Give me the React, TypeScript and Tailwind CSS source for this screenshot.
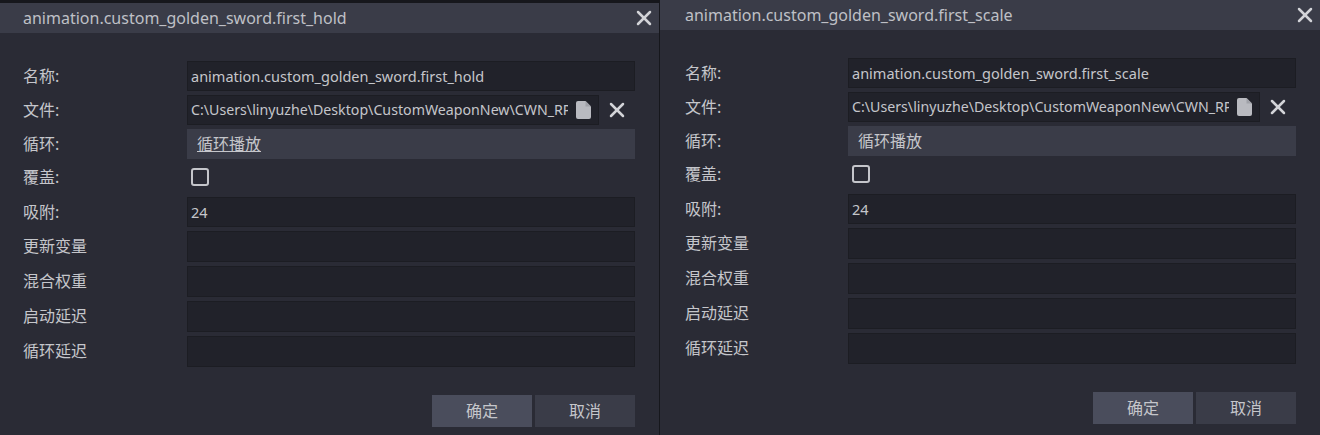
import { X } from 'lucide-react'

const font = { fontFamily: '"Noto Sans", "Noto Sans CJK SC", sans-serif' }

function Row({ label, children, className, labelClass = '' }: { label: string; children: React.ReactNode; className: string; labelClass?: string }) {
  return (
    <div className={`flex items-center ${className}`}>
      <div className={`flex-1 text-[16px] leading-none text-[#c5c6cb] ${labelClass}`}>{label}</div>
      <div className="flex h-full w-[448px] items-center">{children}</div>
    </div>
  )
}

function Field({ value }: { value?: string }) {
  return (
    <div className="h-full w-[448px] truncate border border-[#1c1d23] bg-[#21222a] pl-[3px] text-[14.5px] leading-[28px] text-[#c5c6cb]">
      {value}
    </div>
  )
}

function FileIcon() {
  return (
    <svg viewBox="0 0 15 18" className="h-[18px] w-[15px]" fill="#b9bac0">
      <path d="M2 0h7.5L15 5.5V16a2 2 0 0 1-2 2H2a2 2 0 0 1-2-2V2a2 2 0 0 1 2-2z" />
      <path d="M9.5 0v5.5H15z" fill="#a0a1a8" />
    </svg>
  )
}

function Dialog({ name, top, className, underline }: { name: string; top: boolean; className: string; underline: boolean }) {
  return (
    <div className={`flex h-[435px] flex-col bg-[#2a2b35] ${className}`}>
      {top && <div className="h-[3px] shrink-0 bg-[#16171c]" />}
      <div className={`flex h-[30px] shrink-0 items-center justify-between bg-[#3a3c48] pr-[3px] ${top ? 'pl-[23px]' : 'pl-[25px]'}`}>
        <span className="text-[16px] text-[#bfc0c6]">{name}</span>
        <X size={24} strokeWidth={2.5} className="text-[#d3d4d8]" />
      </div>
      <div className={`flex flex-col pt-[28px] ${top ? 'w-[635px] pl-[23px]' : 'w-[636px] pl-[25px]'}`}>
        <Row label="名称:" className="h-[30px]"><Field value={name} /></Row>
        <Row label="文件:" className="mt-[4px] h-[30px]">
          <div className="flex h-full w-[412px] shrink-0 items-center border border-[#1c1d23] bg-[#21222a] pl-[3px]">
            <span className="w-[377px] shrink-0 overflow-hidden whitespace-nowrap text-[14.2px] text-[#c5c6cb]">C:\Users\linyuzhe\Desktop\CustomWeaponNew\CWN_RP</span>
            <span className="ml-[8px] flex shrink-0"><FileIcon /></span>
          </div>
          <X size={24} strokeWidth={2.5} className="ml-[6px] shrink-0 text-[#d3d4d8]" />
        </Row>
        <Row label="循环:" className="mt-[4px] h-[30px]">
          <div className={`h-full w-[448px] bg-[#3a3c48] pl-[10px] text-[16px] leading-[30px] text-[#c5c6cb] ${underline ? 'underline' : ''}`}>循环播放</div>
        </Row>
        <Row label="覆盖:" className="mt-[4px] h-[28px]">
          <div className="ml-[4px] h-[18px] w-[18px] rounded-[3px] border-2 border-[#c5c6cb]" />
        </Row>
        <Row label="吸附:" className="mt-[6px] h-[30px]"><Field value="24" /></Row>
        <Row label="更新变量" labelClass="pb-[2px]" className="mt-[4px] h-[31px]"><Field /></Row>
        <Row label="混合权重" labelClass="pb-[2px]" className="mt-[4px] h-[31px]"><Field /></Row>
        <Row label="启动延迟" labelClass="pb-[2px]" className="mt-[4px] h-[31px]"><Field /></Row>
        <Row label="循环延迟" labelClass="pb-[2px]" className="mt-[4px] h-[31px]"><Field /></Row>
        <div className="mt-[28px] flex justify-end gap-[3px]">
          <button className="h-[32px] w-[100px] bg-[#4a4d5c] text-[16px] text-[#c5c6cb]">确定</button>
          <button className="h-[32px] w-[100px] bg-[#3a3c48] text-[16px] text-[#c5c6cb]">取消</button>
        </div>
      </div>
    </div>
  )
}

export default function App() {
  return (
    <div className="flex h-[435px] w-[1320px] overflow-hidden bg-[#16171c]" style={font}>
      <Dialog name="animation.custom_golden_sword.first_hold" top className="w-[659px]" underline />
      <div className="w-px bg-[#16171c]" />
      <Dialog name="animation.custom_golden_sword.first_scale" top={false} className="w-[660px]" underline={false} />
    </div>
  )
}
